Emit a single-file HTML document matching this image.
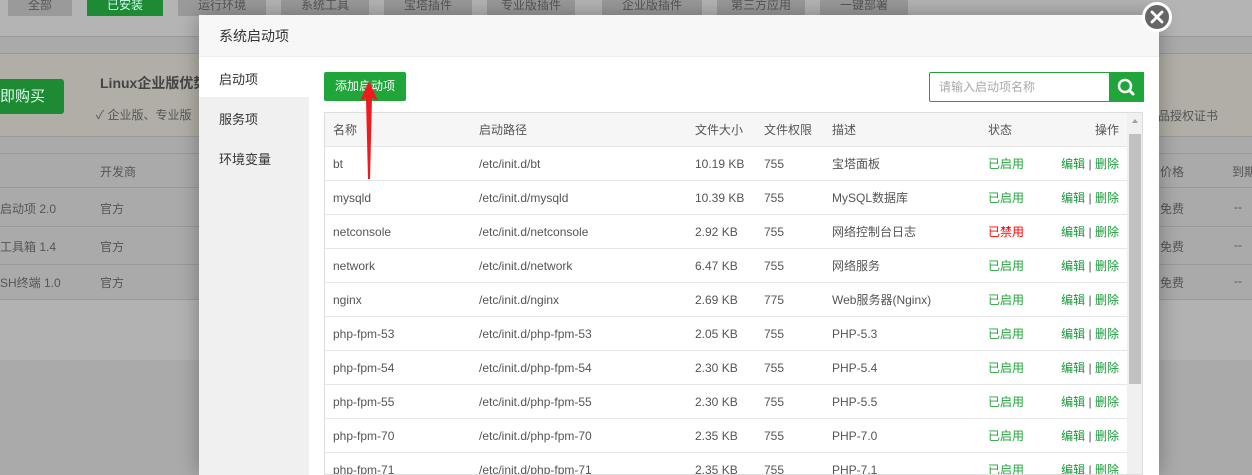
<!DOCTYPE html>
<html><head><meta charset="utf-8"><style>
*{margin:0;padding:0;box-sizing:border-box}
body{width:1252px;height:475px;overflow:hidden;background:#aaa;font-family:"Liberation Sans","Noto Sans CJK SC",sans-serif;font-size:12px;color:#555;position:relative}
.a{position:absolute;white-space:nowrap}
.nb{position:absolute;top:0;height:16px;background:#9a9a9a;color:#555;text-align:center;font-size:12px;line-height:10px;overflow:hidden}
.g{color:#1a9a3a}
table{border-collapse:collapse}
td{white-space:nowrap}
</style></head><body>
<div class="a" style="left:0;top:0;width:1252px;height:37px;background:#b4b4b4;border-bottom:1px solid #999"></div>
<div class="nb" style="left:8px;width:64px">全部</div>
<div class="nb" style="left:87px;width:76px;background:#1e8a34;color:#cfe">已安装</div>
<div class="nb" style="left:178px;width:88px">运行环境</div>
<div class="nb" style="left:281px;width:88px">系统工具</div>
<div class="nb" style="left:384px;width:88px">宝塔插件</div>
<div class="nb" style="left:487px;width:88px">专业版插件</div>
<div class="nb" style="left:602px;width:100px">企业版插件</div>
<div class="nb" style="left:717px;width:88px">第三方应用</div>
<div class="nb" style="left:820px;width:88px">一键部署</div>
<div class="a" style="left:0;top:53px;width:1252px;height:84px;background:#b0aea6;border-top:1px solid #999;border-bottom:1px solid #999"></div>
<div class="a" style="left:0;top:79px;width:64px;height:35px;background:#1e8a34;border-radius:0 3px 3px 0;color:#dfe;font-size:15px;line-height:35px">即购买</div>
<div class="a" style="left:100px;top:73px;font-weight:bold;font-size:14px;color:#444">Linux企业版优势</div>
<div class="a" style="left:96px;top:106px;color:#555">✓ 企业版、专业版</div>
<div class="a" style="left:1158px;top:107px;color:#555">品授权证书</div>
<div class="a" style="left:0;top:153px;width:1252px;height:1px;background:#999"></div>
<div class="a" style="left:0;top:187px;width:1252px;height:1px;background:#999"></div>
<div class="a" style="left:0;top:226px;width:1252px;height:1px;background:#999"></div>
<div class="a" style="left:0;top:264px;width:1252px;height:1px;background:#999"></div>
<div class="a" style="left:0;top:299px;width:1252px;height:1px;background:#999"></div>
<div class="a" style="left:0;top:300px;width:1252px;height:60px;background:#b2b2b2"></div>
<div class="a" style="left:100px;top:163px">开发商</div>
<div class="a" style="left:1160px;top:163px">价格</div><div class="a" style="left:1232px;top:163px">到期</div>
<div class="a" style="left:0;top:200px">启动项 2.0</div><div class="a" style="left:100px;top:200px">官方</div><div class="a" style="left:1160px;top:200px">免费</div><div class="a" style="left:1234px;top:200px">--</div>
<div class="a" style="left:0;top:238px">工具箱 1.4</div><div class="a" style="left:100px;top:238px">官方</div><div class="a" style="left:1160px;top:238px">免费</div><div class="a" style="left:1234px;top:238px">--</div>
<div class="a" style="left:0;top:274px">SH终端 1.0</div><div class="a" style="left:100px;top:274px">官方</div><div class="a" style="left:1160px;top:274px">免费</div><div class="a" style="left:1234px;top:274px">--</div>

<div class="a" style="left:199px;top:15px;width:960px;height:460px;background:#fff;box-shadow:0 0 20px rgba(0,0,0,.3)">
 <div class="a" style="left:0;top:0;width:960px;height:42px;background:#f7f7f7;border-bottom:1px solid #eee;font-size:14px;color:#333;line-height:42px;padding-left:20px">系统启动项</div>
 <div class="a" style="left:0;top:42px;width:110px;height:418px;background:#f0f0f0"></div>
 <div class="a" style="left:0;top:42px;width:110px;height:40px;background:#fff"></div>
 <div class="a" style="left:20px;top:54px;font-size:13px;color:#333">启动项</div>
 <div class="a" style="left:20px;top:94px;font-size:13px;color:#333">服务项</div>
 <div class="a" style="left:20px;top:134px;font-size:13px;color:#333">环境变量</div>
 <div class="a" style="left:125px;top:57px;width:82px;height:29px;background:#20a53a;border-radius:2px;color:#fff;line-height:29px;text-align:center">添加启动项</div>
 <div class="a" style="left:730px;top:57px;width:181px;height:30px;border:1px solid #20a53a;border-radius:2px 0 0 2px;color:#aaa;line-height:28px;padding-left:9px">请输入启动项名称</div>
 <div class="a" style="left:910px;top:57px;width:35px;height:30px;background:#20a53a">
  <svg width="35" height="30"><circle cx="16" cy="14" r="6" fill="none" stroke="#fff" stroke-width="2.5"/><line x1="20.5" y1="18.5" x2="24" y2="22" stroke="#fff" stroke-width="3" stroke-linecap="round"/></svg></div>
 <div class="a" style="left:125px;top:97px;width:819px;height:363px;border:1px solid #ddd;overflow:hidden">
  <table style="width:802px">
   <tr style="background:#f6f6f6;height:33px"><td style="padding-left:8px;width:154px">名称</td><td style="width:216px">启动路径</td><td style="width:69px">文件大小</td><td style="width:68px">文件权限</td><td style="width:156px">描述</td><td style="width:60px">状态</td><td style="text-align:right;padding-right:8px">操作</td></tr>
  </table>
  <div id="rows"></div>
  <div class="a" style="left:802px;top:0;width:16px;height:363px;background:#f0f0f0"></div>
  <div class="a" style="left:804px;top:21px;width:12px;height:250px;background:#c1c1c1"></div>
  <div class="a" style="left:807px;top:6px;width:0;height:0;border:3px solid transparent;border-bottom:4px solid #a0a0a0;border-top:0"></div>
 </div>
 <svg class="a" style="left:155px;top:64px" width="30" height="105"><polygon points="15,2 24,22 18,19 16,100 14,100 12,19 6,22" fill="#f0191e"/></svg>
</div>
<div class="a" style="left:1142px;top:2px;width:30px;height:30px;border-radius:50%;background:#666;border:3px solid #fff">
<svg width="24" height="24" style="position:absolute;left:0;top:0"><path d="M7 7L17 17M17 7L7 17" stroke="#fff" stroke-width="2.8" stroke-linecap="round"/></svg></div>
<script>
var d=[["bt","/etc/init.d/bt","10.19 KB","755","宝塔面板",1],["mysqld","/etc/init.d/mysqld","10.39 KB","755","MySQL数据库",1],["netconsole","/etc/init.d/netconsole","2.92 KB","755","网络控制台日志",0],["network","/etc/init.d/network","6.47 KB","755","网络服务",1],["nginx","/etc/init.d/nginx","2.69 KB","775","Web服务器(Nginx)",1],["php-fpm-53","/etc/init.d/php-fpm-53","2.05 KB","755","PHP-5.3",1],["php-fpm-54","/etc/init.d/php-fpm-54","2.30 KB","755","PHP-5.4",1],["php-fpm-55","/etc/init.d/php-fpm-55","2.30 KB","755","PHP-5.5",1],["php-fpm-70","/etc/init.d/php-fpm-70","2.35 KB","755","PHP-7.0",1],["php-fpm-71","/etc/init.d/php-fpm-71","2.35 KB","755","PHP-7.1",1]];
var h='<table style="width:802px">';
d.forEach(function(r){h+='<tr style="height:34px;border-top:1px solid #e6e6e6"><td style="padding-left:8px;width:154px">'+r[0]+'</td><td style="width:216px">'+r[1]+'</td><td style="width:69px">'+r[2]+'</td><td style="width:68px">'+r[3]+'</td><td style="width:156px">'+r[4]+'</td><td style="width:60px;color:'+(r[5]?'#20a53a':'#f00')+'">'+(r[5]?'已启用':'已禁用')+'</td><td style="text-align:right;padding-right:8px"><span class="g">编辑</span> | <span class="g">删除</span></td></tr>';});
document.getElementById('rows').innerHTML=h+'</table>';
</script>
</body></html>
